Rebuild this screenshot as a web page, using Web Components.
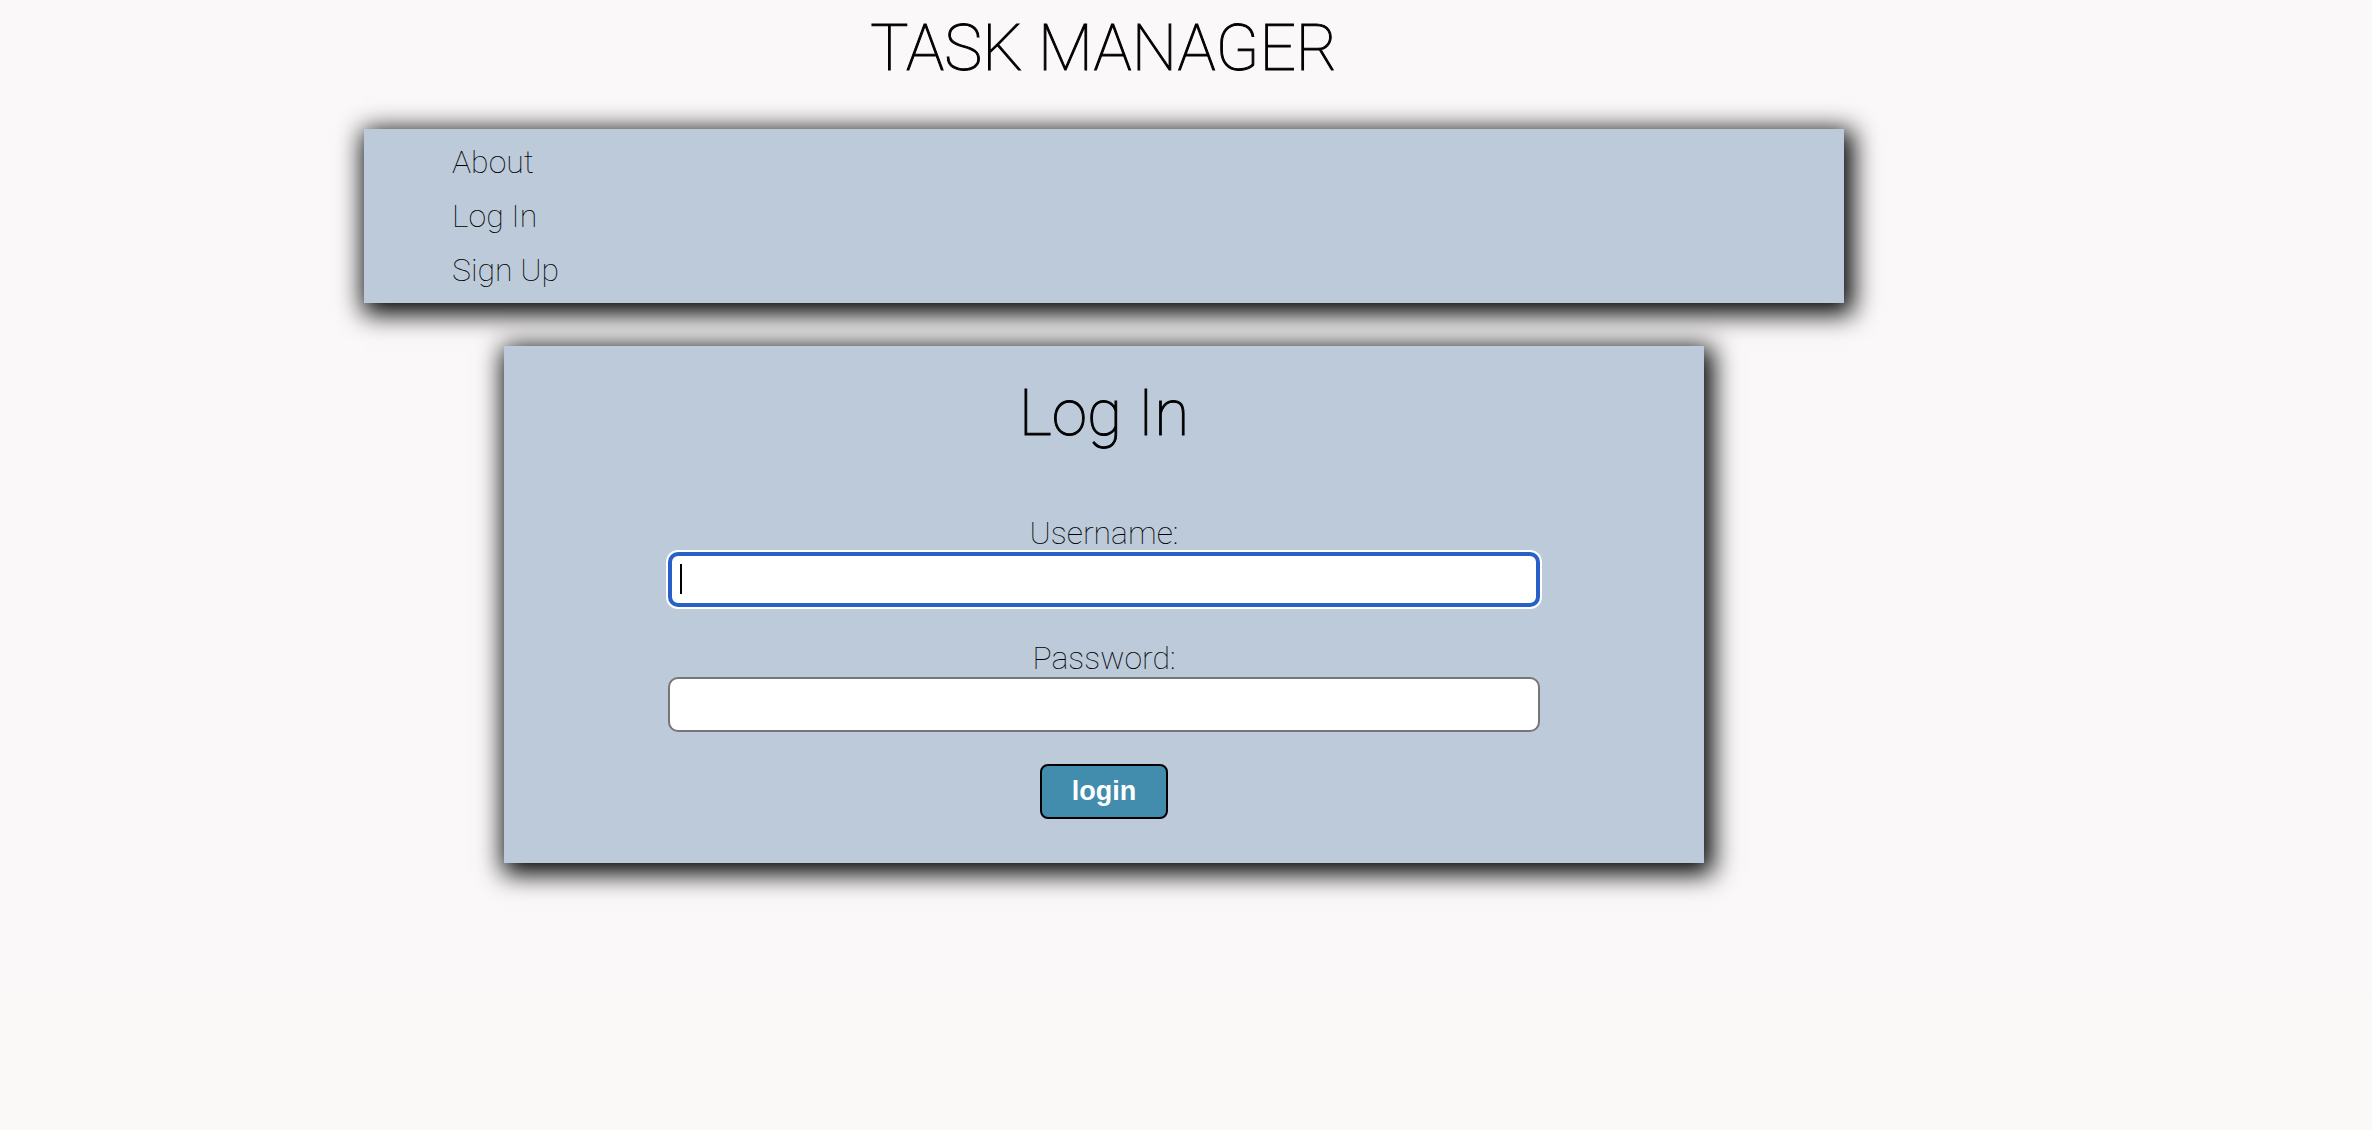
<!DOCTYPE html>
<html lang="en">
<head>
<meta charset="utf-8">
<title>Task Manager</title>
<style>
  html { min-height: 100%; background: linear-gradient(#faf8f9 86%, #faf9f7 89%); }
  body { margin: 0; font-family: Roboto, "Liberation Sans", sans-serif; font-weight: 100; font-size: 32px; color: #000; }
</style>
</head>
<body>
<task-app>
  <site-nav slot="nav"></site-nav>
  <login-card heading="Log In">
    <text-field label="Username:" name="username" type="text" active></text-field>
    <text-field label="Password:" name="password" type="password"></text-field>
    <submit-button>login</submit-button>
  </login-card>
</task-app>
<script>
class TaskApp extends HTMLElement {
  constructor() {
    super();
    this.attachShadow({ mode: "open" }).innerHTML = `
      <style>
        :host { display: flex; flex-direction: column; align-items: center; padding: 11px 164px 48px 0; --panel: #bccada; --panel-shadow: 4px 6px 24px 5px #000; }
        h1 { margin: 0 0 42px; font-size: 64px; line-height: 76px; font-weight: inherit; -webkit-text-stroke: 1px #000; }
        main { display: flex; justify-content: center; width: 100%; margin-top: 43px; }
        header { display: flex; flex-direction: column; align-items: center; width: 100%; }
      </style>
      <header><h1>TASK MANAGER</h1><slot name="nav"></slot></header>
      <main><slot></slot></main>`;
  }
}
class SiteNav extends HTMLElement {
  constructor() {
    super();
    this.attachShadow({ mode: "open" }).innerHTML = `
      <style>
        :host { display: block; box-sizing: border-box; width: 100%; max-width: 1480px; padding: 6px 88px; background: var(--panel, #bccada); box-shadow: var(--panel-shadow, 4px 6px 24px 5px #000); }
        ul { margin: 0; padding: 0; list-style: none; }
        li { line-height: 54px; }
        a { color: inherit; text-decoration: none; }
      </style>
      <nav><ul>
        <li><a href="#about">About</a></li>
        <li><a href="#login">Log In</a></li>
        <li><a href="#signup">Sign Up</a></li>
      </ul></nav>`;
  }
}
class LoginCard extends HTMLElement {
  constructor() {
    super();
    this.attachShadow({ mode: "open" }).innerHTML = `
      <style>
        :host { display: block; box-sizing: border-box; width: 100%; max-width: 1200px; padding: 30px 164px 44px; background: var(--panel, #bccada); box-shadow: var(--panel-shadow, 4px 6px 24px 5px #000); }
        h2 { margin: 0 0 62px; font-size: 64px; line-height: 76px; font-weight: inherit; text-align: center; -webkit-text-stroke: 1px #000; }
        form { display: flex; flex-direction: column; align-items: center; gap: 32px; }
      </style>
      <h2></h2><form><slot></slot></form>`;
    this.shadowRoot.querySelector("h2").textContent = this.getAttribute("heading");
  }
}
class TextField extends HTMLElement {
  constructor() {
    super();
    this.attachShadow({ mode: "open" }).innerHTML = `
      <style>
        :host { display: flex; flex-direction: column; align-items: center; width: 100%; }
        label { line-height: 38px; }
        .box { position: relative; width: 100%; }
        input { display: block; box-sizing: border-box; width: 100%; height: 55px; padding: 0 10px; border: 2px solid #767676; border-radius: 10px; background: #fff; font: inherit; outline: none; }
        :host([active]) input { border: 4px solid #285fc8; box-shadow: 0 0 0 2px #fff; caret-color: transparent; }
        .caret { display: none; position: absolute; left: 12px; top: 12px; width: 2px; height: 30px; background: #000; }
        :host([active]) .caret { display: block; }
      </style>
      <label for="field"></label>
      <div class="box"><input id="field"><span class="caret"></span></div>`;
    this.shadowRoot.querySelector("label").textContent = this.getAttribute("label");
    const input = this.shadowRoot.querySelector("input");
    input.name = this.getAttribute("name");
    input.type = this.getAttribute("type");
  }
}
class SubmitButton extends HTMLElement {
  constructor() {
    super();
    this.attachShadow({ mode: "open" }).innerHTML = `
      <style>
        :host { display: block; }
        button { box-sizing: border-box; display: block; height: 55px; padding: 0 30px; border: 2px solid #000; border-radius: 8px; background: #428dad; color: #fff; font: bold 27px "Liberation Sans", Arial, sans-serif; }
      </style>
      <button type="submit"><slot></slot></button>`;
  }
}
customElements.define("task-app", TaskApp);
customElements.define("site-nav", SiteNav);
customElements.define("login-card", LoginCard);
customElements.define("text-field", TextField);
customElements.define("submit-button", SubmitButton);
</script>
</body>
</html>
